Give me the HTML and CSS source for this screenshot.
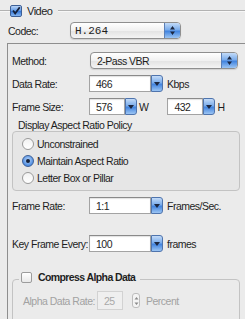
FILE: index.html
```html
<!DOCTYPE html>
<html lang="en">
<head>
  <meta charset="UTF-8">
  <title>Video Settings</title>
  <link rel="stylesheet" href="styles.css">
</head>
<body>

<div class="panel">
  <!-- Video group header -->
  <div class="group-head">
    <span class="rule lead"></span>
    <span class="check on">
      <svg width="12" height="12" viewBox="0 0 12 12"><path d="M2.5 5.5 L5 9 L10.5 1.5" fill="none" stroke="#16213a" stroke-width="2.2"/></svg>
    </span>
    <span class="head-title">Video</span>
    <span class="rule"></span>
  </div>

  <div class="row codec-row">
    <span class="label">Codec:</span>
    <div class="popup codec">
      <span class="popup-text mono">H.264</span>
      <span class="stepper-btn">
        <svg width="5" height="9" viewBox="0 0 5 9"><path d="M2.5 0L5 3.5H0z M0 5.5h5L2.5 9z" fill="#1c2740"/></svg>
      </span>
    </div>
  </div>

  <div class="box">
    <div class="row">
      <span class="label wide">Method:</span>
      <div class="popup method">
        <span class="popup-text">2-Pass VBR</span>
        <span class="stepper-btn">
          <svg width="5" height="9" viewBox="0 0 5 9"><path d="M2.5 0L5 3.5H0z M0 5.5h5L2.5 9z" fill="#1c2740"/></svg>
        </span>
      </div>
    </div>

    <div class="row">
      <span class="label wide">Data Rate:</span>
      <div class="combo">
        <span class="field long">466</span>
        <span class="drop"><svg width="6" height="4" viewBox="0 0 6 4"><path d="M0 0h6L3 4z" fill="#1c2740"/></svg></span>
      </div>
      <span class="unit">Kbps</span>
    </div>

    <div class="row">
      <span class="label wide">Frame Size:</span>
      <div class="combo">
        <span class="field short">576</span>
        <span class="drop"><svg width="6" height="4" viewBox="0 0 6 4"><path d="M0 0h6L3 4z" fill="#1c2740"/></svg></span>
      </div>
      <span class="unit tight">W</span>
      <div class="combo second">
        <span class="field short">432</span>
        <span class="drop"><svg width="6" height="4" viewBox="0 0 6 4"><path d="M0 0h6L3 4z" fill="#1c2740"/></svg></span>
      </div>
      <span class="unit tight">H</span>
    </div>

    <!-- Aspect ratio policy -->
    <div class="policy-title">Display Aspect Ratio Policy</div>
    <div class="policy">
      <label class="radio-row"><span class="radio"></span>Unconstrained</label>
      <label class="radio-row"><span class="radio on"></span>Maintain Aspect Ratio</label>
      <label class="radio-row"><span class="radio"></span>Letter Box or Pillar</label>
    </div>

    <div class="row rate-row">
      <span class="label wide">Frame Rate:</span>
      <div class="combo">
        <span class="field long">1:1</span>
        <span class="drop"><svg width="6" height="4" viewBox="0 0 6 4"><path d="M0 0h6L3 4z" fill="#1c2740"/></svg></span>
      </div>
      <span class="unit">Frames/Sec.</span>
    </div>

    <div class="row key-row">
      <span class="label wide">Key Frame Every:</span>
      <div class="combo">
        <span class="field long">100</span>
        <span class="drop"><svg width="6" height="4" viewBox="0 0 6 4"><path d="M0 0h6L3 4z" fill="#1c2740"/></svg></span>
      </div>
      <span class="unit">frames</span>
    </div>

    <fieldset class="alpha">
      <legend>
        <span class="check off"></span>
        <span class="legend-text">Compress Alpha Data</span>
      </legend>
      <div class="row alpha-row">
        <span class="label alpha-label">Alpha Data Rate:</span>
        <span class="field disabled">25</span>
        <span class="mini-stepper">
          <svg width="5" height="10" viewBox="0 0 5 10"><path d="M2.5 1L4.5 3.5H0.5z M0.5 6.5h4L2.5 9z" fill="#8a8a8a"/></svg>
        </span>
        <span class="unit muted">Percent</span>
      </div>
    </fieldset>
  </div>
</div>

</body>
</html>
```

FILE: styles.css
```css
body {
  margin: 0;
  width: 245px;
  height: 319px;
  overflow: hidden;
  background: #ebebeb;
  font-family: 'Liberation Sans', Arial, sans-serif;
  font-size: 10.5px;
  letter-spacing: -0.5px;
  color: #1e1e1e;
}

.panel {
  width: 245px;
  height: 319px;
  overflow: hidden;
}

/* Video group header */
.group-head {
  display: flex;
  align-items: center;
  height: 22px;
}

.rule {
  flex: 1;
  height: 0;
  border-top: 1px solid #b2b2b2;
  border-bottom: 1px solid #f7f7f7;
}

.rule.lead {
  flex: 0 0 10px;
}

.head-title {
  margin: 0 6px 0 5px;
  font-size: 11px;
}

.check {
  width: 12px;
  height: 12px;
  box-sizing: border-box;
  border-radius: 2px;
  display: flex;
  align-items: center;
  justify-content: center;
}

.check.on {
  background: linear-gradient(#b7d3f6, #5f98e6 50%, #3a7ad9 55%, #86b6f0);
  border: 1px solid #3d5f96;
}

.check.off {
  width: 11px;
  height: 11px;
  background: linear-gradient(#ffffff, #e9e9e9);
  border: 1px solid #9c9c9c;
}

/* rows */
.row {
  display: flex;
  align-items: center;
  height: 17px;
}

.label {
  flex: 0 0 auto;
}

.codec-row {
  padding-left: 8px;
}

.codec-row .label {
  width: 62px;
}

.label.wide {
  width: 77px;
}

/* popup buttons */
.popup {
  display: flex;
  align-items: center;
  height: 17px;
  box-sizing: border-box;
  border: 1px solid #8f8f8f;
  border-radius: 4px;
  background: linear-gradient(#ffffff, #f1f1f1 50%, #e4e4e4 55%, #f4f4f4);
  box-shadow: 0 1px 1px rgba(0,0,0,0.12);
  overflow: hidden;
}

.popup.codec {
  width: 111px;
}

.popup.method {
  width: 148px;
  margin-left: 1px;
}

.popup-text {
  flex: 1;
  padding-left: 6px;
}

.mono {
  font-family: 'Liberation Mono', 'DejaVu Sans Mono', monospace;
  font-size: 11px;
  letter-spacing: 0;
  padding-left: 4px;
}

.stepper-btn {
  width: 15px;
  height: 100%;
  display: flex;
  align-items: center;
  justify-content: center;
  border-left: 1px solid #5b7fb6;
  background: linear-gradient(#c3dbf8, #7aaceb 45%, #4284df 55%, #9cc5f3);
}

/* combo boxes */
.box {
  width: 250px;
  margin: 4px 0 0 7px;
  padding: 8px 0 0 4px;
  border-top: 1px solid #8e8e8e;
  border-left: 1px solid #8e8e8e;
  height: 300px;
}

.box > .row + .row {
  margin-top: 6px;
}

.combo {
  display: flex;
  height: 17px;
}

.combo.second {
  margin-left: 19px;
}

.field {
  box-sizing: border-box;
  height: 17px;
  padding-left: 6px;
  display: flex;
  align-items: center;
  background: #fff;
  border: 1px solid #a3a3a3;
  border-top-color: #8a8a8a;
  box-shadow: inset 0 1px 1px rgba(0,0,0,0.12);
}

.field.long {
  width: 62px;
}

.field.short {
  width: 36px;
}

.drop {
  width: 12px;
  box-sizing: border-box;
  display: flex;
  align-items: center;
  justify-content: center;
  border: 1px solid #4f74ad;
  border-radius: 0 3px 3px 0;
  background: linear-gradient(#c3dbf8, #7aaceb 45%, #4284df 55%, #9cc5f3);
}

.unit {
  margin-left: 4px;
}

.unit.tight {
  margin-left: 2px;
}

/* aspect ratio policy */
.policy-title {
  margin: 4px 0 0 6px;
  height: 12px;
  line-height: 12px;
}

.policy {
  width: 228px;
  box-sizing: border-box;
  padding: 3px 0 4px 9px;
  border: 1px solid #c3c3c3;
  border-radius: 4px;
  background: #e6e6e6;
}

.radio-row {
  display: flex;
  align-items: center;
  height: 17px;
}

.radio {
  width: 12px;
  height: 12px;
  box-sizing: border-box;
  margin-right: 3px;
  border-radius: 50%;
  border: 1px solid #9a9a9a;
  background: linear-gradient(#f2f2f2, #ffffff);
  display: flex;
  align-items: center;
  justify-content: center;
}

.radio.on {
  border-color: #3d5f96;
  background: radial-gradient(circle at 50% 40%, #bcd7f7, #4f8ee3 70%, #3a78d4);
}

.radio.on::after {
  content: '';
  width: 4px;
  height: 4px;
  border-radius: 50%;
  background: #13203a;
}

.box > .rate-row {
  margin-top: 6px;
}

.box > .row.key-row {
  margin-top: 21px;
}

/* compress alpha */
.alpha {
  width: 228px;
  box-sizing: border-box;
  margin: 18px 0 0 0;
  padding: 0;
  border: 1px solid #c3c3c3;
  border-radius: 4px;
  height: 80px;
  min-width: 0;
}

.alpha legend {
  display: flex;
  align-items: center;
  height: 14px;
  padding: 0 5px 4px 2px;
  margin-left: 6px;
}

.legend-text {
  margin-left: 6px;
  font-weight: bold;
  letter-spacing: -0.6px;
}

.alpha-row {
  height: 19px;
  margin-top: 3px;
  padding-left: 10px;
  color: #a2a2a2;
}

.alpha-label {
  width: 74px;
}

.field.disabled {
  width: 26px;
  height: 19px;
  color: #a8a8a8;
  background: #efefef;
  border-color: #d2d2d2;
  box-shadow: none;
}

.mini-stepper {
  margin-left: 9px;
  width: 8px;
  height: 15px;
  box-sizing: border-box;
  border: 1px solid #bdbdbd;
  border-radius: 3px;
  background: #f4f4f4;
  display: flex;
  align-items: center;
  justify-content: center;
}

.unit.muted {
  margin-left: 6px;
}
```
